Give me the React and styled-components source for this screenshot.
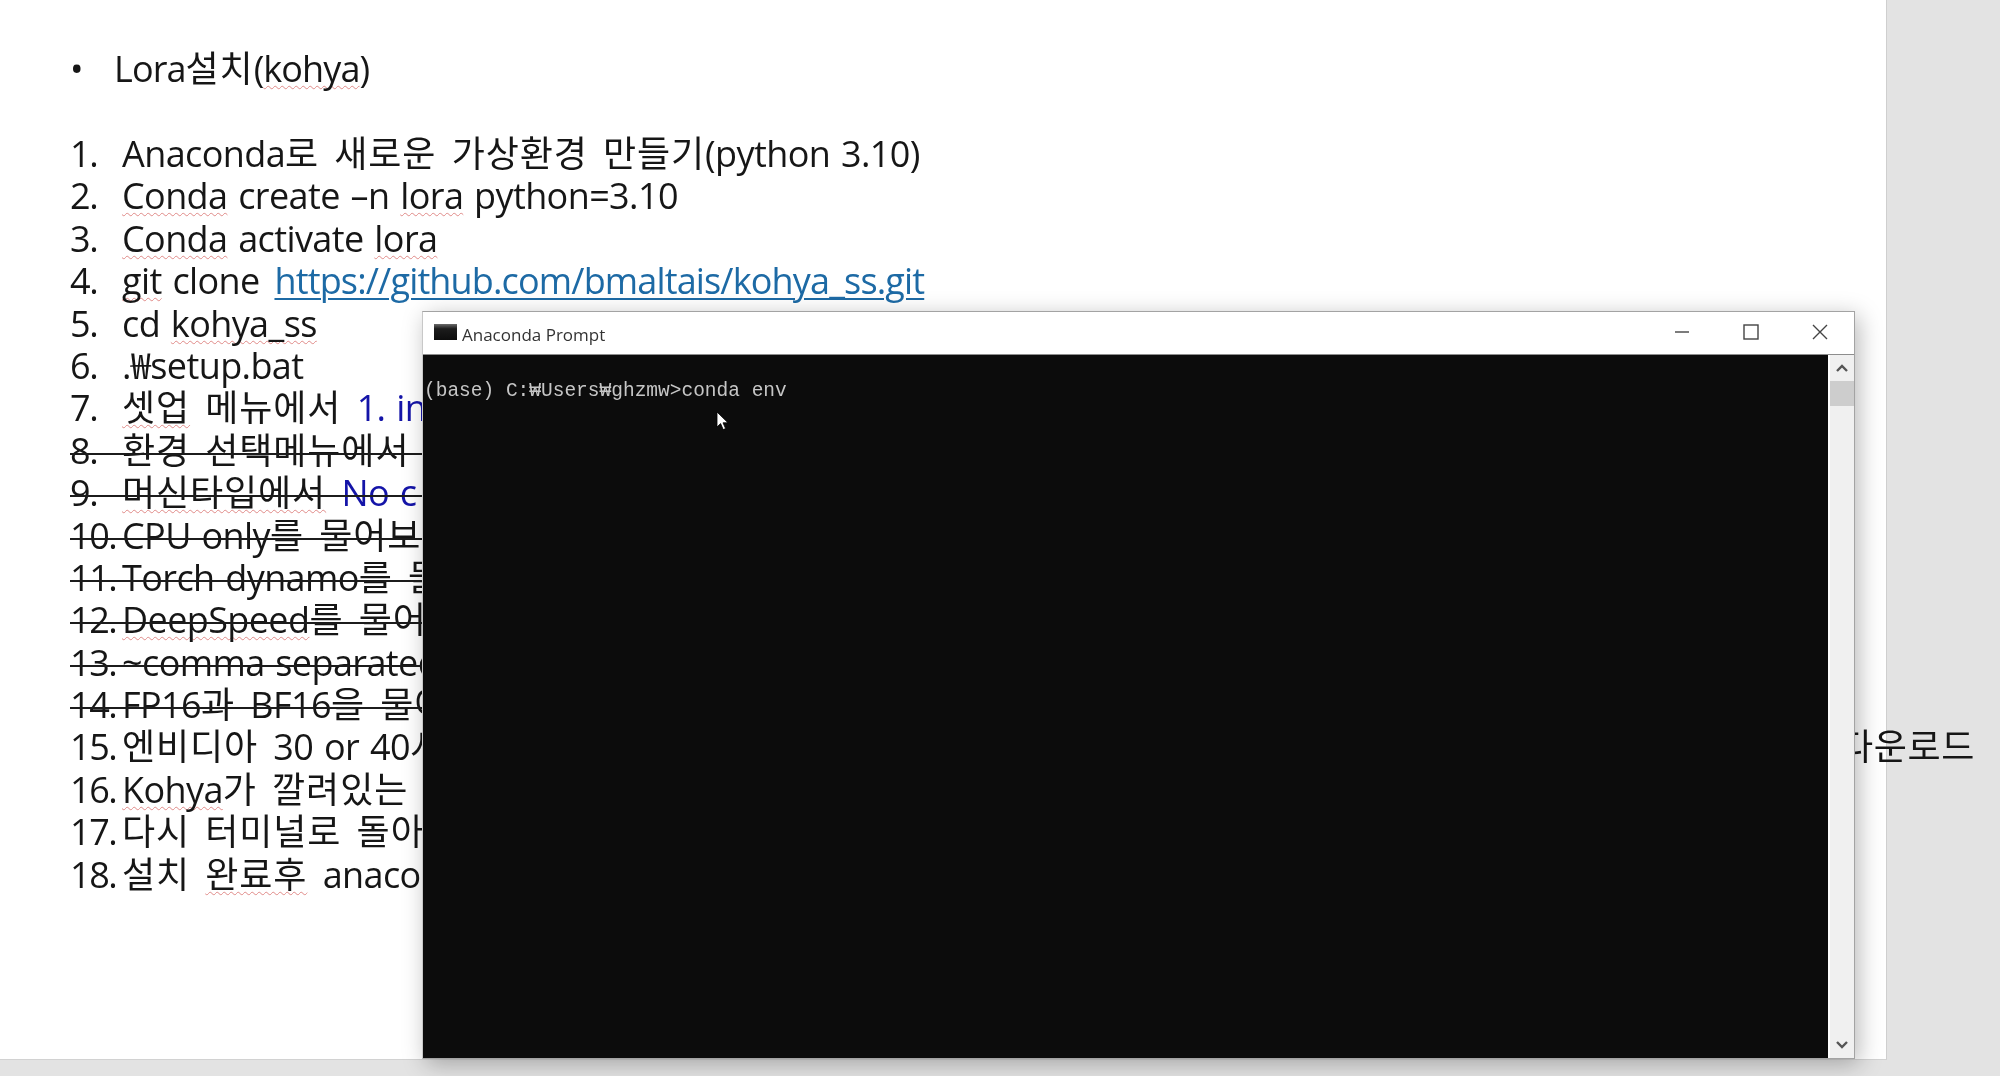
import React from "react";
import styled, { createGlobalStyle } from "styled-components";

const Global = createGlobalStyle`
  html, body { margin: 0; padding: 0; background: #e3e3e3; }
`;

const Desktop = styled.div`
  position: relative;
  width: 2000px;
  height: 1076px;
  overflow: hidden;
  background: #e3e3e3;
  font-family: "Open Sans", "Noto Sans CJK KR", sans-serif;
  color: #161616;
  filter: blur(0.4px);
`;

const Sheet = styled.main`
  box-sizing: border-box;
  width: 1887px;
  height: 1060px;
  padding: 44px 0 0 70px;
  background: #fff;
  border-right: 1px solid #cfcfcf;
  border-bottom: 1px solid #d2d2d2;
`;

const Heading = styled.div`
  display: flex;
  align-items: baseline;
  height: 50px;
  margin-bottom: 39px;
  font-size: 36px;
  line-height: 50px;
  letter-spacing: -0.9px;
  white-space: pre;
`;

const Bullet = styled.span`
  width: 44px;
`;

const List = styled.ol`
  width: 1905px;
  margin: 0;
  padding: 0;
  list-style: none;
`;

const Row = styled.li`
  position: relative;
  display: flex;
  align-items: baseline;
  height: 42.4px;
  font-size: 36px;
  line-height: 42.4px;
  letter-spacing: -0.6px;
  word-spacing: 2px;
  white-space: pre;

  ${(p) =>
    p.$struck &&
    `
    &::after {
      content: "";
      position: absolute;
      left: 0;
      width: 400px;
      top: 23px;
      height: 2px;
      background: #1c1c1c;
    }
  `}
`;

const Num = styled.span`
  flex: 0 0 52px;
  letter-spacing: -1.4px;
`;

const Ko = styled.span`
  letter-spacing: 0.9px;
  word-spacing: 5px;
`;

const Spell = styled.span`
  text-decoration: underline wavy #e08a88 1px;
  text-underline-offset: 3px;
  text-decoration-skip-ink: none;
`;

const Link = styled.span`
  margin-left: 4px;
  color: #1d6aa5;
  letter-spacing: -0.85px;
  text-decoration: underline #1d6aa5 2px;
  text-underline-offset: 4px;
`;

const Blue = styled.span`
  color: #1414a8;
`;

const Tail = styled.span`
  margin-left: auto;
  letter-spacing: 0.6px;
`;

const Win = styled.section`
  position: absolute;
  left: 422px;
  top: 311px;
  box-sizing: border-box;
  width: 1433px;
  height: 748px;
  display: flex;
  flex-direction: column;
  background: #fff;
  border: 1px solid #a3a3a3;
  border-left-color: #c8c8c8;
  box-shadow: 4px 5px 22px rgba(0, 0, 0, 0.28);
`;

const TitleBar = styled.header`
  flex: 0 0 43px;
  display: flex;
  align-items: center;
  padding-left: 11px;
  border-bottom: 1px solid #8d8d8d;
  box-sizing: border-box;
`;

const TitleIcon = styled.span`
  flex: 0 0 23px;
  height: 16px;
  margin-top: -3px;
  background: linear-gradient(#6a6a6a, #1c1c1c 30%, #0d0d0d);
`;

const TitleText = styled.span`
  margin-left: 5px;
  padding-top: 2px;
  font-size: 17px;
  color: #333;
`;

const Controls = styled.div`
  display: flex;
  align-items: center;
  margin-left: auto;
  margin-right: 26px;
  gap: 53px;
  color: #444;
`;

const Control = styled.svg`
  width: 16px;
  height: 16px;
  margin-top: -2px;
  fill: none;
  stroke: currentColor;
  stroke-width: 1.4;
`;

const Body = styled.div`
  flex: 1;
  display: flex;
  min-height: 0;
`;

const Console = styled.div`
  position: relative;
  flex: 1;
  padding: 23px 0 0 1px;
  background: #0c0c0c;
  color: #c6c6c6;
  font-family: "Liberation Mono", "Noto Sans CJK KR", monospace;
  font-size: 19.5px;
  line-height: 26px;
  white-space: pre;
`;

const Pointer = styled.svg`
  position: absolute;
  left: 293px;
  top: 56px;
  width: 13px;
  height: 21px;
`;

const Scroll = styled.aside`
  flex: 0 0 26px;
  display: flex;
  flex-direction: column;
  align-items: center;
  box-sizing: border-box;
  background: #f0f0f0;
  border-left: 2px solid #fff;
  color: #555;
`;

const Arrow = styled.svg`
  flex: 0 0 26px;
  width: 14px;
  fill: none;
  stroke: currentColor;
  stroke-width: 2.4;
`;

const Thumb = styled.div`
  flex: 0 0 25px;
  align-self: stretch;
  background: #cdcdcd;
`;

const Fill = styled.div`
  flex: 1;
`;

const W = "\u20A9";

export default function App() {
  return (
    <Desktop>
      <Global />
      <Sheet>
        <Heading>
          <Bullet>•</Bullet>
          <span>
            Lora<Ko>설치</Ko>(<Spell>kohya</Spell>)
          </span>
        </Heading>
        <List>
          <Row><Num>1.</Num><span>Anaconda<Ko>로 새로운 가상환경 만들기</Ko>(python 3.10)</span></Row>
          <Row><Num>2.</Num><span><Spell>Conda</Spell> create –n <Spell>lora</Spell> python=3.10</span></Row>
          <Row><Num>3.</Num><span><Spell>Conda</Spell> activate <Spell>lora</Spell></span></Row>
          <Row><Num>4.</Num><span><Spell>git</Spell> clone <Link>https://github.com/bmaltais/kohya_ss.git</Link></span></Row>
          <Row><Num>5.</Num><span>cd <Spell>kohya_ss</Spell></span></Row>
          <Row><Num>6.</Num><span>.{W}setup.bat</span></Row>
          <Row><Num>7.</Num><span><Ko><Spell>셋업</Spell> 메뉴에서 </Ko><Blue>1. in</Blue></span></Row>
          <Row $struck><Num>8.</Num><Ko>환경 선택메뉴에서</Ko></Row>
          <Row $struck><Num>9.</Num><span><Ko><Spell>머신타입에서</Spell> </Ko><Blue>No c</Blue></span></Row>
          <Row $struck><Num>10.</Num><span>CPU only<Ko>를 물어보</Ko></span></Row>
          <Row $struck><Num>11.</Num><span>Torch dynamo<Ko>를 물</Ko></span></Row>
          <Row $struck><Num>12.</Num><span><Spell>DeepSpeed</Spell><Ko>를 물어</Ko></span></Row>
          <Row $struck><Num>13.</Num><span>~comma separated</span></Row>
          <Row $struck><Num>14.</Num><span>FP16<Ko>과 </Ko>BF16<Ko>을 물어</Ko></span></Row>
          <Row><Num>15.</Num><span><Ko>엔비디아 </Ko>30 or 40<Ko>시</Ko></span><Tail>다운로드</Tail></Row>
          <Row><Num>16.</Num><span><Spell>Kohya</Spell><Ko>가 깔려있는</Ko></span></Row>
          <Row><Num>17.</Num><Ko>다시 터미널로 돌아</Ko></Row>
          <Row><Num>18.</Num><span><Ko>설치 <Spell>완료후</Spell> </Ko>anaco</span></Row>
        </List>
      </Sheet>
      <Win>
        <TitleBar>
          <TitleIcon />
          <TitleText>Anaconda Prompt</TitleText>
          <Controls>
            <Control viewBox="0 0 16 16"><path d="M1 8h14" /></Control>
            <Control viewBox="0 0 16 16"><rect x="1" y="1" width="14" height="14" /></Control>
            <Control viewBox="0 0 16 16"><path d="M1 1l14 14M15 1L1 15" /></Control>
          </Controls>
        </TitleBar>
        <Body>
          <Console>
            {`(base) C:${W}Users${W}ghzmw>conda env`}
            <Pointer viewBox="0 0 13 21">
              <path d="M1 1v15l3.6-3.4 2.6 6 2.4-1-2.6-5.8H12z" fill="#fff" stroke="#000" strokeWidth="0.8" />
            </Pointer>
          </Console>
          <Scroll>
            <Arrow viewBox="0 0 14 26"><path d="M2 16l5-5 5 5" /></Arrow>
            <Thumb />
            <Fill />
            <Arrow viewBox="0 0 14 26"><path d="M2 10l5 5 5-5" /></Arrow>
          </Scroll>
        </Body>
      </Win>
    </Desktop>
  );
}
